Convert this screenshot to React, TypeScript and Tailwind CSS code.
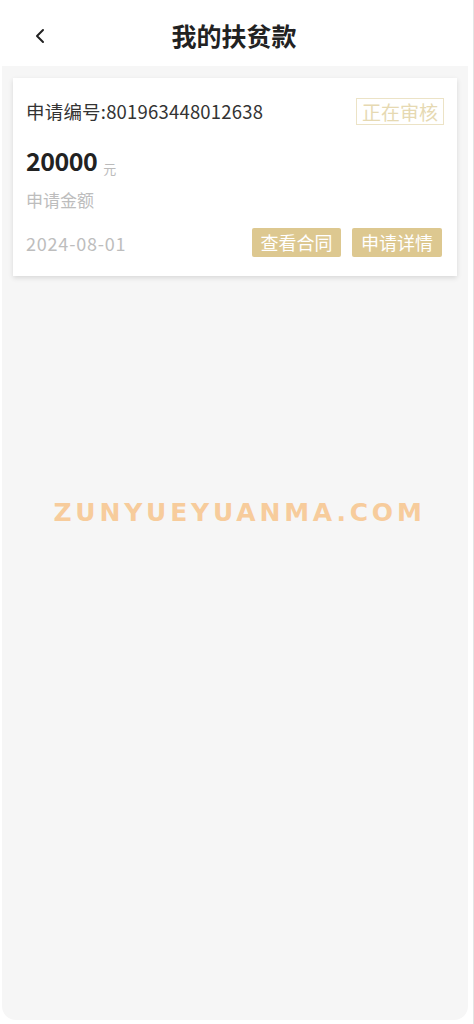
import React from "react";

export default function App() {
  const font = { fontFamily: '"Noto Sans CJK SC", "Noto Sans", sans-serif' };
  return (
    <div className="w-[474px] h-[1024px] bg-white relative overflow-hidden" style={font}>
      <div className="absolute right-0 top-0 w-[1px] h-full bg-[#e4e4e4]" />
      <div className="h-[66px] flex items-center relative">
        <div className="absolute left-[33px] top-[27px]">
          <svg width="14" height="18" viewBox="0 0 14 18">
            <path d="M10 3 L4 9 L10 15" fill="none" stroke="#222" strokeWidth="2" strokeLinecap="round" strokeLinejoin="round" />
          </svg>
        </div>
        <div className="w-full text-center pr-[6px] pt-[4px] text-[25px] font-bold text-[#222] leading-none">我的扶贫款</div>
      </div>
      <div className="ml-[2px] w-[466px] h-[954px] bg-[#f6f6f6] rounded-b-[14px] pt-[12px] pl-[11px]">
        <div className="w-[444px] h-[198px] bg-white shadow-[0_2px_5px_rgba(0,0,0,0.12)] pl-[13px] pr-[13px] pt-[20px]">
          <div className="flex items-center justify-between h-[27px]">
            <div className="text-[18.5px] text-[#333] leading-none tracking-[0.2px]">申请编号:801963448012638</div>
            <div className="h-[27px] px-[5px] border border-[#ece3c6] text-[#e6d9b2] text-[19px] leading-[25px]">正在审核</div>
          </div>
          <div className="flex items-end mt-[24px] h-[24px]">
            <span className="text-[25px] font-bold text-[#222] leading-none tracking-[-0.5px]">20000</span>
            <span className="text-[13px] text-[#bbb] ml-[6px] leading-none mb-[-2px]">元</span>
          </div>
          <div className="mt-[18px] text-[17px] text-[#bdbdbd] leading-none">申请金额</div>
          <div className="flex items-center justify-between mt-[20px] h-[29px]">
            <div className="text-[18px] text-[#bdbdbd] leading-none tracking-[0.8px]">2024-08-01</div>
            <div className="flex gap-[11px] mr-[2px]">
              <div className="h-[29px] w-[89px] bg-[#ddc890] rounded-[2px] text-white text-[18px] leading-[29px] text-center">查看合同</div>
              <div className="h-[29px] w-[90px] bg-[#ddc890] rounded-[2px] text-white text-[18px] leading-[29px] text-center">申请详情</div>
            </div>
          </div>
        </div>
        <div className="mt-[218px] text-center pr-[2px] text-[25px] font-semibold tracking-[3.8px] text-[#f7cc9c]" style={{ fontFamily: '"DejaVu Sans", sans-serif' }}>
          ZUNYUEYUANMA.COM
        </div>
      </div>
    </div>
  );
}
